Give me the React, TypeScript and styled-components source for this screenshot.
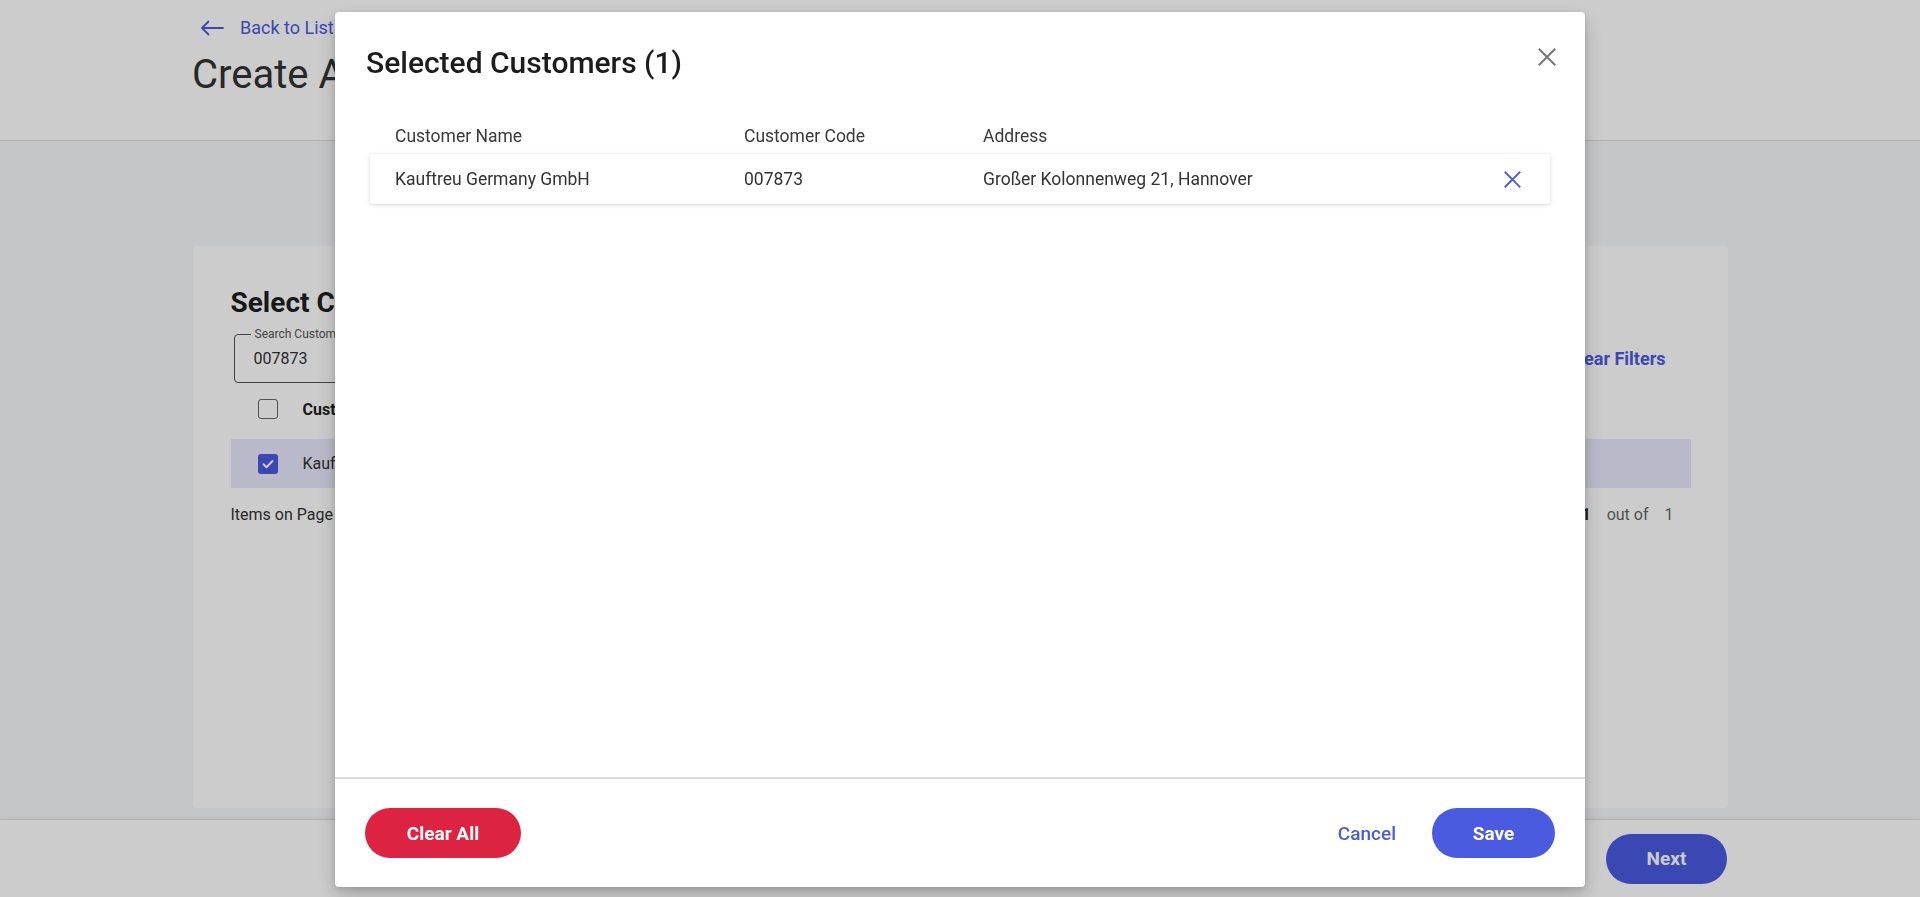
import React from "react"
import styled, { createGlobalStyle } from "styled-components"

const GlobalStyle = createGlobalStyle`
  html, body {
    margin: 0;
    padding: 0;
    height: 100%;
  }
  body {
    font-family: Roboto, "Liberation Sans", Arial, sans-serif;
    color: #333;
    overflow: hidden;
  }
  #root {
    height: 100%;
  }
  * {
    box-sizing: border-box;
  }
`

type TCustomer = {
  id: number
  name: string
  code: string
  address: string
}

const selected: TCustomer[] = [
  { id: 1, name: "Kauftreu Germany GmbH", code: "007873", address: "Großer Kolonnenweg 21, Hannover" }
]

const ArrowLeft = () => (
  <svg width="24" height="16" viewBox="0 0 24 16" fill="none">
    <path d="M23 8H2M8.5 1.5L2 8l6.5 6.5" stroke="currentColor" strokeWidth="1.8" strokeLinecap="round" strokeLinejoin="round" />
  </svg>
)

const Cross = ({ size }: { size: number }) => (
  <svg width={size} height={size} viewBox="0 0 18 18" fill="none">
    <path d="M1.5 1.5l15 15M16.5 1.5l-15 15" stroke="currentColor" strokeWidth="2" strokeLinecap="square" />
  </svg>
)

const Check = () => (
  <svg width="14" height="14" viewBox="0 0 14 14" fill="none">
    <path d="M2.5 7.3l3 3 6-6.3" stroke="#fff" strokeWidth="2" strokeLinecap="round" strokeLinejoin="round" />
  </svg>
)

const App: React.FC = () => {
  return (
    <>
      <GlobalStyle />
      <Page>
        <Header>
          <BackLink>
            <ArrowLeft />
            Back to List
          </BackLink>
          <PageTitle>Create Assortment</PageTitle>
        </Header>
        <Body>
          <Card>
            <CardTitle>Select Customers</CardTitle>
            <FilterRow>
              <SearchField>
                <FieldLabel>Search Customer</FieldLabel>
                <FieldValue>007873</FieldValue>
              </SearchField>
              <TextLink>Clear Filters</TextLink>
            </FilterRow>
            <TableRow>
              <CheckBox />
              <HeadCell>Customer Name</HeadCell>
              <HeadCell>Customer Code</HeadCell>
              <HeadCell>Address</HeadCell>
            </TableRow>
            <TableRow $selected>
              <CheckBox $checked>
                <Check />
              </CheckBox>
              <Cell>Kauftreu Germany GmbH</Cell>
              <Cell>007873</Cell>
              <Cell>Großer Kolonnenweg 21, Hannover</Cell>
            </TableRow>
            <Pagination>
              <span>Items on Page</span>
              <Pager>
                <b>1</b>
                <span>out of</span>
                <span>1</span>
              </Pager>
            </Pagination>
          </Card>
        </Body>
        <Footer>
          <PillButton $color="#4a5be0">Next</PillButton>
        </Footer>
      </Page>

      <Overlay>
        <Modal>
          <ModalHeader>
            <ModalTitle>Selected Customers ({selected.length})</ModalTitle>
            <CloseButton aria-label="close">
              <Cross size={18} />
            </CloseButton>
          </ModalHeader>
          <ModalBody>
            <ListHead>
              <span>Customer Name</span>
              <span>Customer Code</span>
              <span>Address</span>
            </ListHead>
            {selected.map((c) => (
              <ListCard key={c.id}>
                <span>{c.name}</span>
                <span>{c.code}</span>
                <span>{c.address}</span>
                <RemoveButton aria-label="remove">
                  <Cross size={17} />
                </RemoveButton>
              </ListCard>
            ))}
          </ModalBody>
          <ModalFooter>
            <PillButton $color="#dc2342" $width={156}>Clear All</PillButton>
            <FooterRight>
              <TextButton>Cancel</TextButton>
              <PillButton $color="#4a5be0" $width={123}>Save</PillButton>
            </FooterRight>
          </ModalFooter>
        </Modal>
      </Overlay>
    </>
  )
}

export default App

const Page = styled.div`
  display: flex;
  flex-direction: column;
  height: 100vh;
  background: #f7f8fa;
`

const Header = styled.div`
  display: flex;
  flex-direction: column;
  height: 141px;
  flex-shrink: 0;
  padding: 16px 0 0 192px;
  background: #fff;
  border-bottom: 1px solid #dcdcdc;
`

const BackLink = styled.a`
  display: flex;
  align-items: center;
  gap: 16px;
  margin-left: 8px;
  font-size: 18px;
  line-height: 24px;
  color: #4a5be0;
  cursor: pointer;
`

const PageTitle = styled.h1`
  margin: 11px 0 0;
  font-size: 40px;
  line-height: 48px;
  font-weight: 400;
  color: #333;
`

const Body = styled.div`
  flex: 1;
  padding-top: 105px;
`

const Card = styled.div`
  display: flex;
  flex-direction: column;
  width: 1535px;
  height: 562px;
  margin: 0 auto;
  padding: 40px 37px 0 38px;
  background: #fff;
  border-radius: 4px;
`

const CardTitle = styled.h2`
  margin: 0;
  font-size: 28px;
  line-height: 34px;
  font-weight: 700;
  color: #1f1f1f;
`

const FilterRow = styled.div`
  display: flex;
  align-items: center;
  justify-content: space-between;
  margin-top: 14px;
  padding: 0 25px 0 3px;
`

const SearchField = styled.div`
  position: relative;
  display: flex;
  align-items: center;
  width: 480px;
  height: 49px;
  padding-left: 19px;
  border: 1px solid #555;
  border-radius: 4px;
`

const FieldLabel = styled.span`
  position: absolute;
  top: -8px;
  left: 16px;
  padding: 0 4px;
  background: #fff;
  font-size: 12px;
  line-height: 14px;
  color: #555;
`

const FieldValue = styled.span`
  font-size: 16px;
  color: #333;
`

const TextLink = styled.a`
  font-size: 18px;
  font-weight: 700;
  color: #4a5be0;
  cursor: pointer;
`

const TableRow = styled.div<{ $selected?: boolean }>`
  display: grid;
  grid-template-columns: 45px 560px 400px 1fr;
  align-items: center;
  height: ${({ $selected }) => ($selected ? "49px" : "42px")};
  margin-top: ${({ $selected }) => ($selected ? "9px" : "5px")};
  padding-left: 27px;
  background: ${({ $selected }) => ($selected ? "#e8e8fd" : "transparent")};
`

const CheckBox = styled.span<{ $checked?: boolean }>`
  display: flex;
  align-items: center;
  justify-content: center;
  width: 20px;
  height: 20px;
  border-radius: 3px;
  border: ${({ $checked }) => ($checked ? "none" : "1.5px solid #666")};
  background: ${({ $checked }) => ($checked ? "#4a5be0" : "#fff")};
`

const HeadCell = styled.span`
  font-size: 16px;
  font-weight: 700;
  color: #222;
`

const Cell = styled.span`
  font-size: 16px;
  color: #333;
`

const Pagination = styled.div`
  display: flex;
  justify-content: space-between;
  align-items: center;
  margin-top: 15px;
  padding-right: 17px;
  font-size: 16px;
  line-height: 24px;
  color: #333;
`

const Pager = styled.div`
  display: flex;
  gap: 16px;
  color: #666;
  > b {
    color: #222;
  }
`

const Footer = styled.div`
  display: flex;
  align-items: center;
  justify-content: flex-end;
  height: 78px;
  flex-shrink: 0;
  padding-right: 193px;
  background: #fff;
  border-top: 1px solid #dedede;
  box-shadow: 0 -1px 4px rgba(0, 0, 0, 0.06);
`

const PillButton = styled.button<{ $color: string; $width?: number }>`
  width: ${({ $width }) => $width || 121}px;
  height: 50px;
  border: none;
  border-radius: 25px;
  background: ${({ $color }) => $color};
  color: #fff;
  font-family: inherit;
  font-size: 19px;
  font-weight: 700;
  cursor: pointer;
`

const Overlay = styled.div`
  position: fixed;
  inset: 0;
  display: flex;
  justify-content: center;
  align-items: flex-start;
  padding-top: 12px;
  background: rgba(0, 0, 0, 0.2);
`

const Modal = styled.div`
  display: flex;
  flex-direction: column;
  width: 1250px;
  height: 875px;
  background: #fff;
  border-radius: 4px;
  box-shadow: 0 8px 20px rgba(0, 0, 0, 0.2), 0 2px 6px rgba(0, 0, 0, 0.12);
`

const ModalHeader = styled.div`
  display: flex;
  justify-content: space-between;
  align-items: flex-start;
  padding: 33px 18px 0 31px;
`

const ModalTitle = styled.h2`
  margin: 0;
  font-size: 30px;
  line-height: 36px;
  font-weight: 500;
  color: #1c1c1c;
`

const CloseButton = styled.button`
  display: flex;
  align-items: center;
  justify-content: center;
  width: 40px;
  height: 40px;
  margin-top: -8px;
  padding: 0;
  border: none;
  background: transparent;
  color: #777;
  cursor: pointer;
`

const ModalBody = styled.div`
  flex: 1;
  display: flex;
  flex-direction: column;
  padding: 0 35px;
`

const columns = `349px 239px 1fr 32px`

const ListHead = styled.div`
  display: grid;
  grid-template-columns: ${columns};
  margin-top: 43px;
  margin-bottom: 6px;
  padding-left: 25px;
  font-size: 17.5px;
  line-height: 24px;
  color: #3a3a3a;
`

const ListCard = styled.div`
  display: grid;
  grid-template-columns: ${columns};
  align-items: center;
  height: 50px;
  padding: 0 22px 0 25px;
  border-radius: 4px;
  background: #fff;
  box-shadow: 0 1px 4px rgba(0, 0, 0, 0.16);
  font-size: 17.5px;
  color: #333;
`

const RemoveButton = styled.button`
  display: flex;
  align-items: center;
  justify-content: center;
  width: 32px;
  height: 32px;
  padding: 0;
  border: none;
  background: transparent;
  color: #4a5be0;
  cursor: pointer;
`

const ModalFooter = styled.div`
  display: flex;
  justify-content: space-between;
  align-items: center;
  padding: 29px 30px;
  border-top: 2px solid #dcdcdc;
`

const FooterRight = styled.div`
  display: flex;
  align-items: center;
  gap: 6px;
`

const TextButton = styled.button`
  height: 50px;
  padding: 0 30px;
  border: none;
  background: transparent;
  color: #4a5be0;
  font-family: inherit;
  font-size: 19px;
  font-weight: 500;
  cursor: pointer;
`
